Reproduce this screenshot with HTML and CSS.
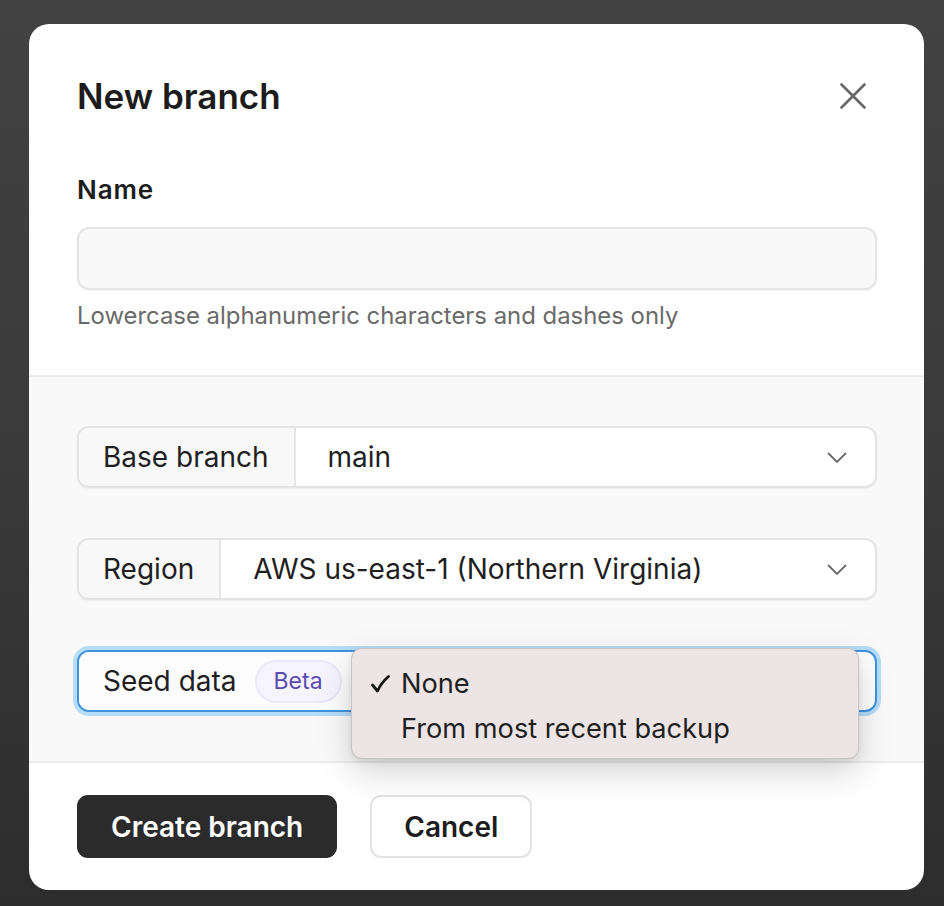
FILE: index.html
```html
<!DOCTYPE html>
<html lang="en">
<head>
<meta charset="utf-8">
<title>New branch</title>
<link rel="stylesheet" href="styles.css">
</head>
<body>
<div class="backdrop">
  <div class="modal">
    <div class="top">
      <div class="header">
        <h1 class="title">New branch</h1>
        <button class="close" aria-label="Close">
          <svg width="26" height="26" viewBox="0 0 26 26"><path d="M1.5 1.5 L24.5 24.5 M24.5 1.5 L1.5 24.5" stroke="#666" stroke-width="2.6" stroke-linecap="round" fill="none"/></svg>
        </button>
      </div>
      <label class="field-label">Name</label>
      <div class="text-input"></div>
      <p class="hint">Lowercase alphanumeric characters and dashes only</p>
    </div>
    <div class="middle">
      <div class="select">
        <div class="select-label">Base branch</div>
        <div class="select-value">main</div>
        <svg class="chev" width="20" height="11" viewBox="0 0 20 11"><path d="M1 1 L10 10 L19 1" stroke="#6b6b6b" stroke-width="1.8" fill="none"/></svg>
      </div>
      <div class="select">
        <div class="select-label">Region</div>
        <div class="select-value">AWS us-east-1 (Northern Virginia)</div>
        <svg class="chev" width="20" height="11" viewBox="0 0 20 11"><path d="M1 1 L10 10 L19 1" stroke="#6b6b6b" stroke-width="1.8" fill="none"/></svg>
      </div>
      <div class="select seed focused">
        <div class="select-label seed-label">Seed data <span class="pill">Beta</span></div>
        <div class="select-value"></div>
        <div class="menu">
          <div class="menu-item"><span class="check"><svg width="19" height="18" viewBox="0 0 19 18"><path d="M1.5 10 L6.5 16 Q10 8 17.5 1.5" stroke="#161616" stroke-width="2.8" stroke-linecap="round" stroke-linejoin="round" fill="none"/></svg></span>None</div>
          <div class="menu-item"><span class="check"></span>From most recent backup</div>
        </div>
      </div>
    </div>
    <div class="footer">
      <button class="btn primary">Create branch</button>
      <button class="btn secondary">Cancel</button>
    </div>
  </div>
</div>
</body>
</html>
```
FILE: styles.css
```css
* { box-sizing: border-box; }
html, body { margin: 0; padding: 0; }
body {
  font-family: Inter, "Noto Sans", sans-serif;
  background: linear-gradient(180deg, #424242 0%, #3a3a3a 50%, #2d2d2d 100%);
  width: 944px;
  height: 906px;
  overflow: hidden;
}
.backdrop {
  padding: 24px 20px 16px 29px;
}
.modal {
  width: 895px;
  height: 866px;
  background: #fff;
  border-radius: 20px;
  overflow: hidden;
  display: flex;
  flex-direction: column;
}
.top {
  padding: 52px 47px 44px 48px;
  border-bottom: 2px solid #ececec;
}
.header {
  display: flex;
  align-items: center;
  justify-content: space-between;
  margin-bottom: 59px;
}
.title {
  margin: 0;
  font-size: 35px;
  line-height: 40px;
  font-weight: 600;
  color: #1c1c1c;
  letter-spacing: 0;
}
.close {
  border: 0;
  background: none;
  padding: 0;
  margin-right: 11px;
  width: 26px;
  height: 26px;
  display: flex;
}
.field-label {
  display: block;
  font-size: 26px;
  line-height: 30px;
  font-weight: 600;
  color: #1c1c1c;
  letter-spacing: 0.9px;
  margin-bottom: 22px;
}
.text-input {
  height: 63px;
  background: #f9f9f9;
  border: 2px solid #e4e4e4;
  border-radius: 12px;
  box-shadow: 0 1px 2px rgba(0,0,0,0.04);
}
.hint {
  margin: 11px 0 0;
  font-size: 23.9px;
  line-height: 30px;
  color: #6a6a6a;
}
.middle {
  flex: 1;
  background: #f9f9f9;
  padding: 49px 47px 49px 48px;
  display: flex;
  flex-direction: column;
  gap: 50px;
  border-bottom: 2px solid #ececec;
}
.select {
  position: relative;
  height: 62px;
  display: flex;
  align-items: stretch;
  background: #fff;
  border: 2px solid #e4e4e4;
  border-radius: 12px;
  box-shadow: 0 1px 2px rgba(0,0,0,0.05);
  font-size: 28px;
  color: #1f1f1f;
}
.select-label {
  display: flex;
  align-items: center;
  padding: 0 25px 0 24px;
  background: #f8f8f8;
  border-right: 2px solid #e6e6e6;
  border-radius: 10px 0 0 10px;
}
.select-value {
  flex: 1;
  display: flex;
  align-items: center;
  padding-left: 32px;
}
.chev {
  align-self: center;
  margin-right: 28px;
}
.focused {
  border-color: #3f93e0;
  box-shadow: 0 0 0 4px #b6dcf7;
}
.seed-label {
  background: #fdfdfd;
}
.pill {
  display: inline-flex;
  align-items: center;
  height: 43px;
  margin-left: 18px;
  padding: 0 17px;
  font-size: 23px;
  color: #5a4bb3;
  background: #f6f4fe;
  border: 2px solid #ece8fb;
  border-radius: 22px;
}
.menu {
  position: absolute;
  left: 272px;
  top: -4px;
  width: 508px;
  height: 111px;
  padding: 12px 0 9px 19px;
  background: #ede5e5;
  border: 1px solid rgba(0,0,0,0.14);
  border-radius: 11px;
  box-shadow: 0 12px 34px rgba(0,0,0,0.18), 0 2px 6px rgba(0,0,0,0.08);
  font-size: 27.2px;
  color: #1f1f1f;
}
.menu-item {
  display: flex;
  align-items: center;
  height: 45px;
}
.check {
  width: 30px;
  height: 18px;
  display: flex;
  align-items: center;
}
.footer {
  padding: 32px 47px 32px 48px;
  display: flex;
  gap: 33px;
}
.btn {
  font-family: Inter, "Noto Sans", sans-serif;
  height: 63px;
  font-size: 28px;
  font-weight: 600;
  border-radius: 11px;
  padding: 0 32px;
}
.primary {
  background: #2b2b2b;
  color: #fff;
  border: 2px solid #2b2b2b;
}
.secondary {
  background: #fff;
  color: #1c1c1c;
  border: 2px solid #e3e3e3;
}
```
